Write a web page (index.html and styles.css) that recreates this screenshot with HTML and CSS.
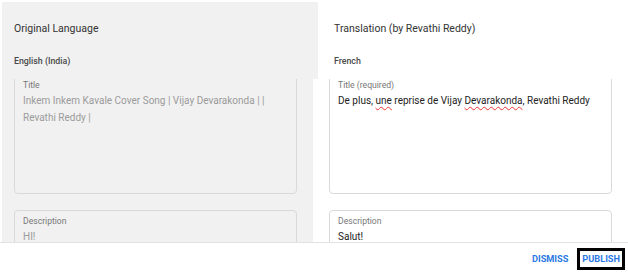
FILE: index.html
```html
<!DOCTYPE html>
<html>
<head>
<meta charset="utf-8">
<link rel="stylesheet" href="styles.css">
</head>
<body>
<div class="dialog">
  <div class="head">
    <div class="head-left">
      <div class="h-title">Original Language</div>
      <div class="h-lang">English (India)</div>
    </div>
    <div class="head-right">
      <div class="h-title">Translation (by Revathi Reddy)</div>
      <div class="h-lang">French</div>
    </div>
  </div>
  <div class="body">
    <div class="col col-left">
      <div class="inner">
        <div class="field field-title">
          <div class="label">Title</div>
          <div class="value muted">Inkem Inkem Kavale Cover Song | Vijay Devarakonda | |<br>Revathi Reddy |</div>
        </div>
        <div class="field field-desc">
          <div class="label">Description</div>
          <div class="value muted">HI!</div>
        </div>
      </div>
    </div>
    <div class="col col-right">
      <div class="inner">
        <div class="field field-title white">
          <div class="label">Title (required)</div>
          <div class="value">De plus, <span class="spell">une</span> reprise de Vijay <span class="spell">Devarakonda</span>, Revathi Reddy</div>
        </div>
        <div class="field field-desc white">
          <div class="label">Description</div>
          <div class="value">Salut!</div>
        </div>
      </div>
    </div>
  </div>
  <div class="foot">
    <button class="btn">DISMISS</button>
    <button class="btn btn-focus">PUBLISH</button>
  </div>
</div>
</body>
</html>
```

FILE: styles.css
```css
* { box-sizing: border-box; }
html, body { margin: 0; padding: 0; background: #fff; }
body {
  font-family: Roboto, "Liberation Sans", sans-serif;
  width: 628px;
  height: 274px;
  overflow: hidden;
}
.dialog {
  display: flex;
  flex-direction: column;
  height: 274px;
  padding-top: 2px;
}
.head {
  display: flex;
  height: 77px;
  flex: none;
}
.head-left {
  width: 316px;
  margin-left: 2px;
  background: #f1f1f1;
  padding: 0 0 0 12px;
}
.head-right {
  flex: 1;
  padding-left: 16px;
}
.h-title {
  font-size: 10.5px;
  color: #333;
  line-height: 14px;
  margin-top: 20px;
}
.h-lang {
  font-size: 8.8px;
  font-weight: 500;
  color: #4a4a4a;
  line-height: 12px;
  margin-top: 19px;
}
.body {
  display: flex;
  height: 164px;
  flex: none;
  border-bottom: 1px solid #e2e2e2;
  overflow: hidden;
}
.col {
  overflow: hidden;
}
.col-left {
  width: 311px;
  margin-left: 2px;
  background: #f1f1f1;
  padding: 0 16px 0 12px;
}
.col-right {
  flex: 1;
  margin-left: 5px;
  padding: 0 16px 0 11px;
}
.inner {
  margin-top: -6px;
}
.field {
  border: 1px solid #d9d9d9;
  border-radius: 4px;
  padding: 0 8px;
}
.field.white { background: #fff; }
.field-title {
  height: 121px;
  padding-top: 5px;
}
.field-desc {
  margin-top: 16px;
  height: 60px;
  padding-top: 4px;
}
.label {
  font-size: 8.6px;
  color: #777;
  line-height: 12px;
}
.value {
  font-size: 10px;
  color: #222;
  line-height: 17px;
  margin-top: 1px;
  white-space: nowrap;
}
.value.muted { color: #9b9b9b; }
.field-desc .value { margin-top: 1px; }
.spell {
  text-decoration: underline wavy #e33;
  text-decoration-thickness: 1px;
  text-underline-offset: 2px;
}
.foot {
  flex: 1;
  display: flex;
  justify-content: flex-end;
  align-items: center;
  padding-right: 3px;
  gap: 4px;
}
.btn {
  font-family: Roboto, "Liberation Sans", sans-serif;
  font-size: 9.2px;
  font-weight: 700;
  color: #2a78e4;
  background: none;
  border: 3px solid transparent;
  padding: 0 2px;
  height: 22px;
  line-height: 16px;
}
.btn-focus {
  border-color: #000;
}
```
